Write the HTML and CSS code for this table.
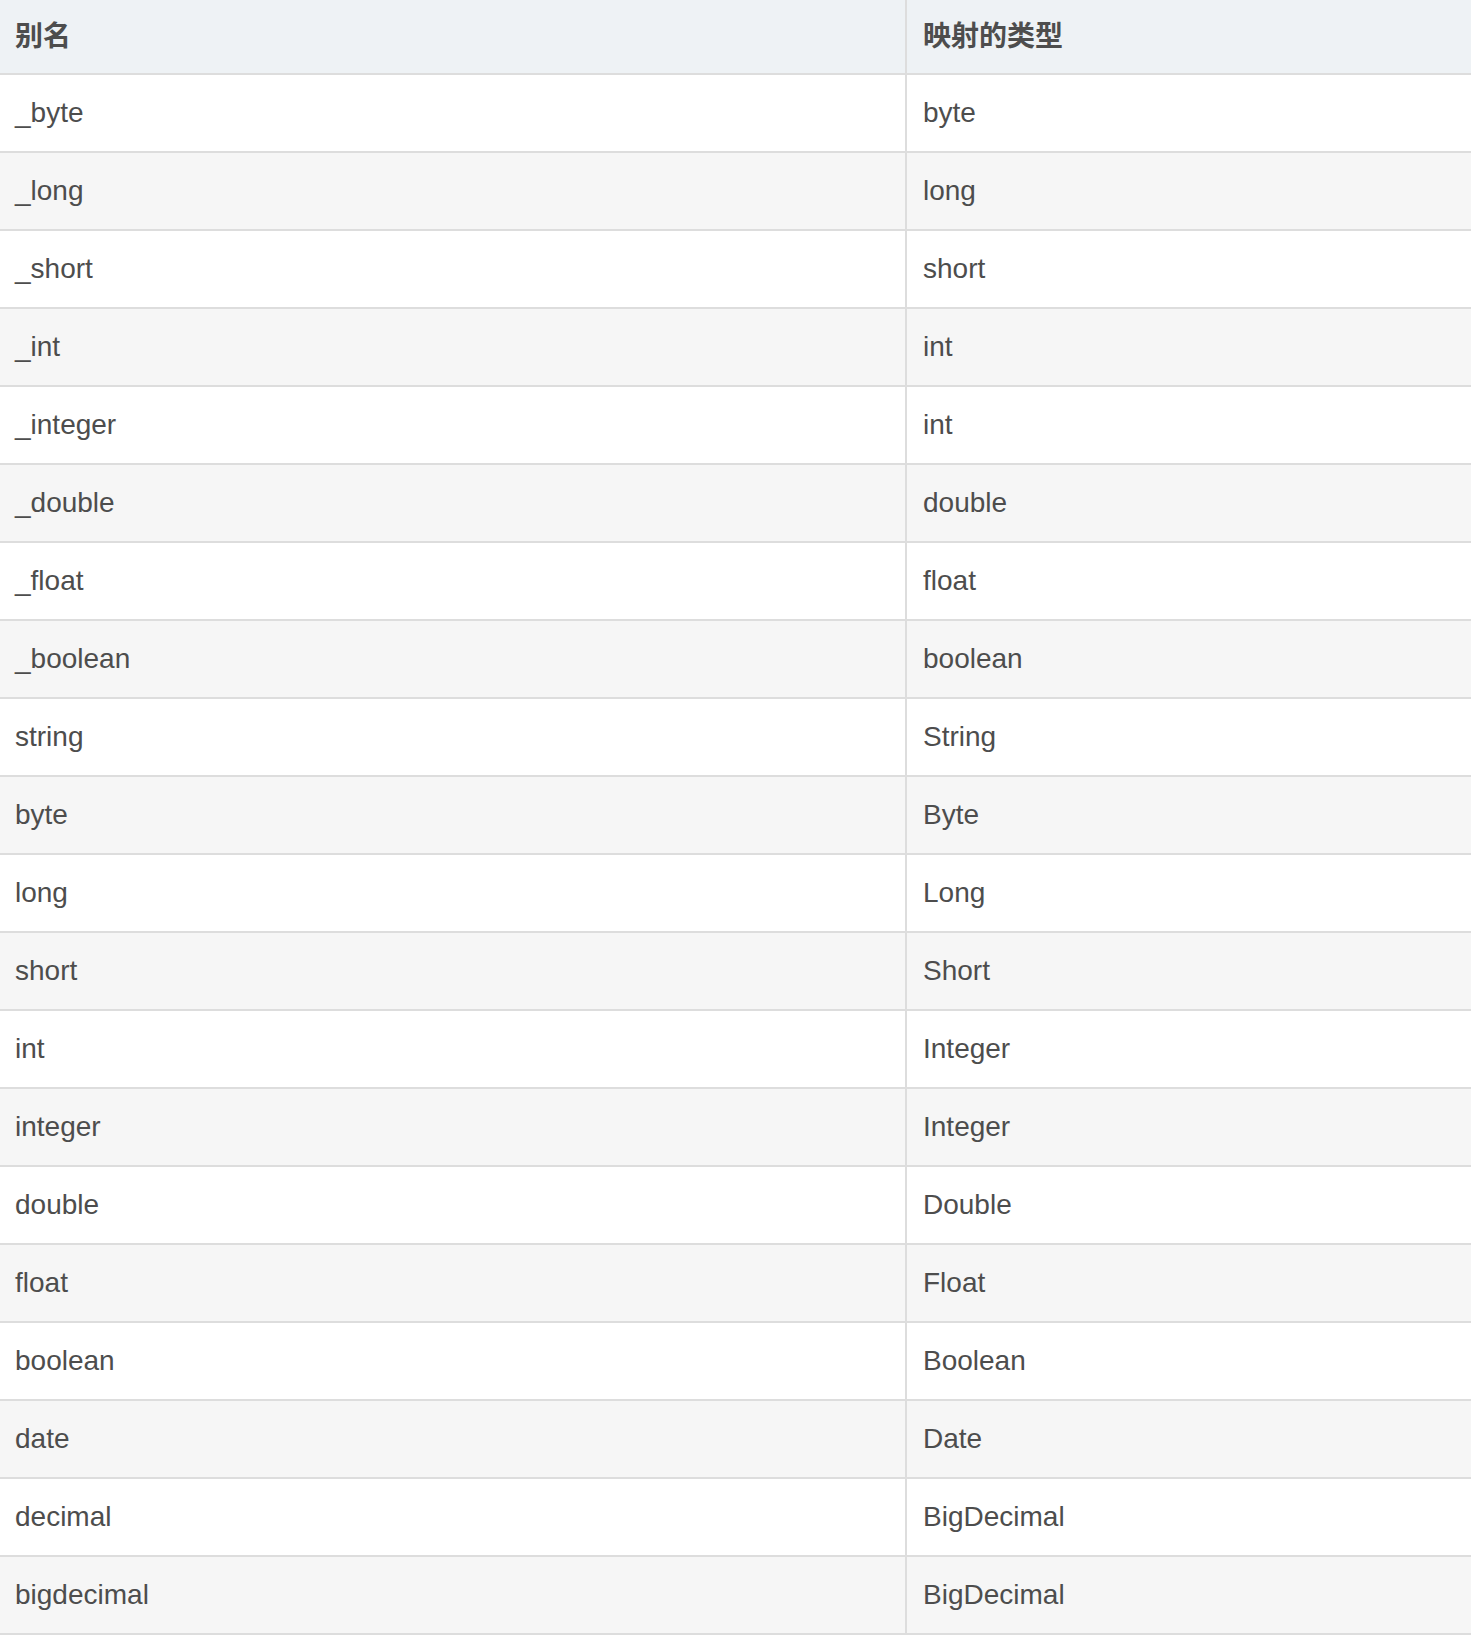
FILE: index.html
```html
<!DOCTYPE html>
<html lang="zh-CN">
<head>
<meta charset="utf-8">
<title>别名</title>
<link rel="stylesheet" href="styles.css">
</head>
<body>
<table class="map">
  <colgroup><col class="c1"><col class="c2"></colgroup>
  <thead>
    <tr><th>别名</th><th>映射的类型</th></tr>
  </thead>
  <tbody>
    <tr><td>_byte</td><td>byte</td></tr>
    <tr><td>_long</td><td>long</td></tr>
    <tr><td>_short</td><td>short</td></tr>
    <tr><td>_int</td><td>int</td></tr>
    <tr><td>_integer</td><td>int</td></tr>
    <tr><td>_double</td><td>double</td></tr>
    <tr><td>_float</td><td>float</td></tr>
    <tr><td>_boolean</td><td>boolean</td></tr>
    <tr><td>string</td><td>String</td></tr>
    <tr><td>byte</td><td>Byte</td></tr>
    <tr><td>long</td><td>Long</td></tr>
    <tr><td>short</td><td>Short</td></tr>
    <tr><td>int</td><td>Integer</td></tr>
    <tr><td>integer</td><td>Integer</td></tr>
    <tr><td>double</td><td>Double</td></tr>
    <tr><td>float</td><td>Float</td></tr>
    <tr><td>boolean</td><td>Boolean</td></tr>
    <tr><td>date</td><td>Date</td></tr>
    <tr><td>decimal</td><td>BigDecimal</td></tr>
    <tr><td>bigdecimal</td><td>BigDecimal</td></tr>
  </tbody>
</table>
</body>
</html>
```
FILE: styles.css
```css
html, body {
  margin: 0;
  padding: 0;
  background: #ffffff;
}
body {
  font-family: "Liberation Sans", Arial, "Noto Sans CJK SC", sans-serif;
  color: #4d4d4d;
}
.map {
  width: 1471px;
  border-collapse: separate;
  border-spacing: 0;
  table-layout: fixed;
  font-size: 28px;
}
.map .c1 { width: 905px; }
.map th,
.map td {
  text-align: left;
  padding: 17px 15px;
  line-height: 42px;
  border-bottom: 2px solid #dddddd;
  white-space: nowrap;
}
.map th + th,
.map td + td {
  border-left: 2px solid #dddddd;
  padding-left: 16px;
}
.map th {
  background: #eef2f5;
  font-family: "Noto Sans CJK SC", "Liberation Sans", sans-serif;
  font-weight: 700;
  padding-top: 13px;
  padding-bottom: 18px;
}
.map tbody tr:nth-child(even) td {
  background: #f6f6f6;
}
```
